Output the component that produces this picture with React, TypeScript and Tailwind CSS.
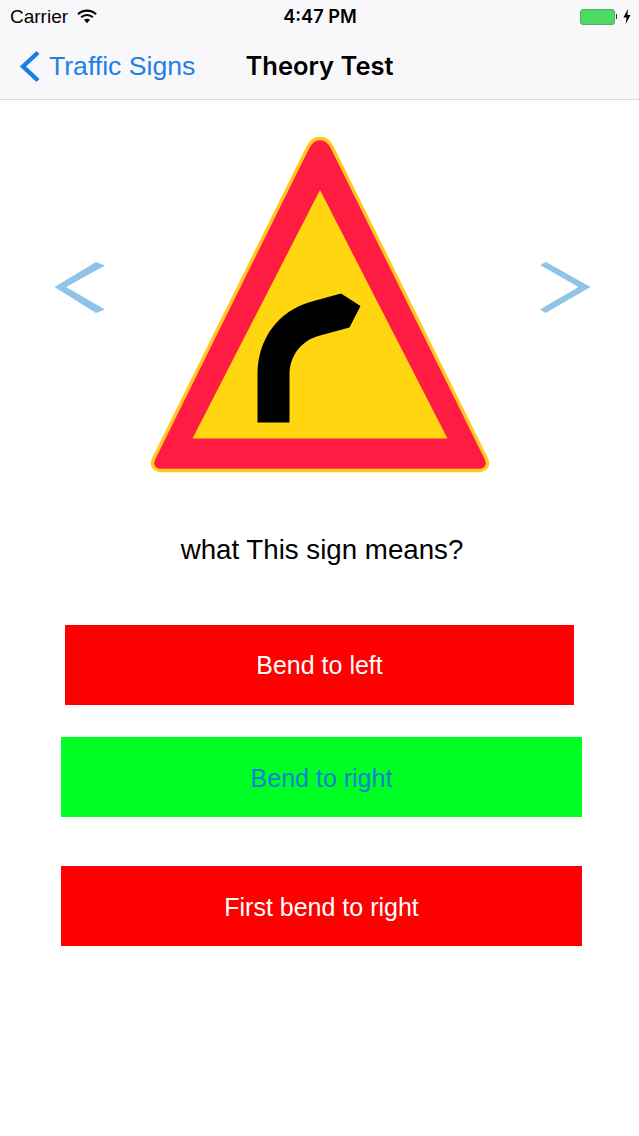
import React from "react";

function Sign() {
  return (
    <svg width="340" height="337" viewBox="150 136 340 337" className="block">
      <path d="M320 138.5 C325 138.5 329 141 332 147 L486 458 C490 466 485 470.5 478 470.5 L162 470.5 C155 470.5 150 466 154 458 L308 147 C311 141 315 138.5 320 138.5 Z" fill="#ff1c42" stroke="#ffc91f" strokeWidth="3.4" />
      <path d="M320 190 L447.5 438.5 L192.5 438.5 Z" fill="#ffd60f" />
      <path d="M257.5 422.5 L257.5 375 C257.5 338 279 311 310 302 L341 293.5 L360.5 306 L349.5 327.5 L320 335.5 C302 340 289.5 355 289.5 375 L289.5 422.5 Z" fill="#000" />
    </svg>
  );
}

export default function App() {
  return (
    <div className="w-[639px] h-[1136px] bg-white flex flex-col font-['Liberation_Sans',Arial,sans-serif] overflow-hidden">
      <div className="h-[100px] bg-[#f8f8fa] border-b border-[#d9d9db] flex flex-col shrink-0">
        <div className="h-[33px] pl-[10px] pr-[8px] flex items-center justify-between relative text-black">
          <div className="flex items-center gap-[9px]">
            <span className="text-[19px] leading-none">Carrier</span>
            <svg width="20" height="15" viewBox="0 0 20 15">
              <path d="M1 5.2 C6 0.4 14 0.4 19 5.2" fill="none" stroke="#000" strokeWidth="2.2" />
              <path d="M4.2 8.3 C7.5 5.2 12.5 5.2 15.8 8.3" fill="none" stroke="#000" strokeWidth="2.2" />
              <path d="M7 10.8 L10 14.2 L13 10.8 C11 9.3 9 9.3 7 10.8 Z" fill="#000" />
            </svg>
          </div>
          <span className="absolute left-[1px] right-0 text-center text-[18.2px] leading-none font-semibold font-['Inter',sans-serif]">4:47 PM</span>
          <div className="flex items-center gap-[6px]">
            <div className="flex items-center gap-[1px]">
              <div className="w-[35px] h-[16px] rounded-[3px] bg-[#4cd964] border border-[#5aa86a]" />
              <div className="w-[1.5px] h-[5px] bg-[#333]" />
            </div>
            <svg width="8" height="15" viewBox="0 0 9 14" preserveAspectRatio="none">
              <path d="M5.5 0 L0.5 8 L4 8 L3 14 L8.5 5.5 L5 5.5 Z" fill="#000" />
            </svg>
          </div>
        </div>
        <div className="flex-1 relative flex items-center">
          <div className="flex items-center pl-[19px] gap-[8px] text-[#1f80e8]">
            <svg width="22" height="33" viewBox="0 0 22 33">
              <path d="M19 2.5 L4 16.5 L19 30.5" fill="none" stroke="#1a7ee8" strokeWidth="4.4" />
            </svg>
            <span className="text-[26.6px] leading-none">Traffic Signs</span>
          </div>
          <span className="absolute left-0 right-0 text-center text-[25.5px] leading-none font-semibold font-['Inter',sans-serif] text-black">Theory Test</span>
        </div>
      </div>

      <div className="flex items-start pl-[54px] pt-[36px]">
        <svg width="52" height="52" viewBox="54 262 52 52" className="mt-[126px]">
          <path d="M54.5 287 L96 262 L105 265.5 L66 287 L105 309.5 L96 313 Z" fill="#90c3e8" />
        </svg>
        <div className="ml-[44px]">
          <Sign />
        </div>
        <svg width="52" height="52" viewBox="539 262 52 52" className="mt-[126px] ml-[49px]">
          <path d="M590.5 287 L546 262 L540 265 L578.5 287 L540 309.5 L545.5 313 Z" fill="#90c3e8" />
        </svg>
      </div>

      <p className="mt-[61px] pl-[5px] text-center text-[27.7px] leading-[32px] text-black">what This sign means?</p>

      <div className="flex flex-col mt-[59px]">
        <button className="ml-[65px] w-[509px] h-[80px] pt-[2px] bg-[#ff0000] text-white text-[25px]">Bend to left</button>
        <button className="mt-[32px] ml-[61px] w-[521px] h-[80px] pt-[3px] bg-[#00ff24] text-[#0a84d0] text-[25px]">Bend to right</button>
        <button className="mt-[49px] ml-[61px] w-[521px] h-[80px] pt-[3px] bg-[#ff0000] text-white text-[25px]">First bend to right</button>
      </div>
    </div>
  );
}
